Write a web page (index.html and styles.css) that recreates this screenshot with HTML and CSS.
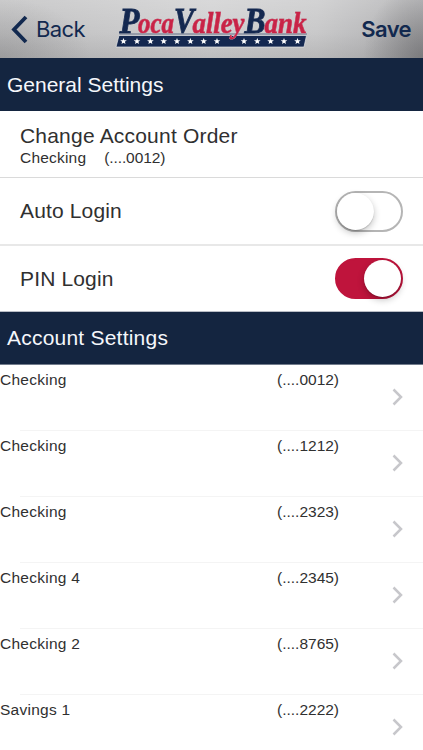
FILE: index.html
```html
<!DOCTYPE html>
<html lang="en">
<head>
<meta charset="utf-8">
<title>Settings</title>
<link rel="stylesheet" href="styles.css">
</head>
<body>
<header class="topbar">
  <a class="back"><svg width="19" height="29" viewBox="0 0 19 29"><path d="M16 2 4 14.5 16 27" fill="none" stroke="#12294f" stroke-width="3.8"/></svg><span>Back</span></a>
  <svg class="logo" width="196" height="58" viewBox="114 0 196 58">
    <defs><path id="star" d="M0-3.4.9-1.1 3.3-1 1.4.5 2 2.8 0 1.5-2 2.8-1.4.5-3.3-1-.9-1.1Z" fill="#fff"/></defs>
    <path d="M119 35.500H306.500L304 47H116Z" fill="#142850" stroke="#e5e6e8" stroke-width=".7"/>
    <path d="M119.500 34H307" stroke="#64708a" stroke-width="1"/>
    <text class="word" y="32.500"><tspan class="cap" x="119.500" textLength="20" lengthAdjust="spacingAndGlyphs">P</tspan><tspan class="low" x="138" textLength="36" lengthAdjust="spacingAndGlyphs">oca</tspan><tspan class="cap" x="174" textLength="20" lengthAdjust="spacingAndGlyphs">V</tspan><tspan class="low" x="192.500" textLength="52" lengthAdjust="spacingAndGlyphs">alley</tspan><tspan class="cap" x="244.500" textLength="21" lengthAdjust="spacingAndGlyphs">B</tspan><tspan class="low" x="264.500" textLength="42" lengthAdjust="spacingAndGlyphs">ank</tspan></text>
    <use href="#star" x="123.500" y="41.300"/><use href="#star" x="137" y="41.300"/><use href="#star" x="150.400" y="41.300"/><use href="#star" x="163.700" y="41.300"/><use href="#star" x="177" y="41.300"/><use href="#star" x="190.400" y="41.300"/><use href="#star" x="203.700" y="41.300"/><use href="#star" x="217" y="41.300"/><use href="#star" x="244" y="41.300"/><use href="#star" x="257.300" y="41.300"/><use href="#star" x="270.600" y="41.300"/><use href="#star" x="284" y="41.300"/><use href="#star" x="297.500" y="41.300"/>
  </svg>
  <a class="save">Save</a>
</header>
<main>
  <h2 class="section general">General Settings</h2>
  <div class="row order"><span class="title">Change Account Order</span><span class="detail"><span>Checking</span><span class="num">(....0012)</span></span></div>
  <div class="row auto"><span>Auto Login</span><span class="switch"><i class="knob"></i></span></div>
  <div class="row last"><span>PIN Login</span><span class="switch on"><i class="knob"></i></span></div>
  <h2 class="section account">Account Settings</h2>
  <div class="list">
    <div class="item"><span class="name">Checking</span><span class="num">(....0012)</span><svg class="chevron" width="11" height="18" viewBox="0 0 11 18"><path d="M1.500 1.500 9 9 1.500 16.500"/></svg></div>
    <div class="item"><span class="name">Checking</span><span class="num">(....1212)</span><svg class="chevron" width="11" height="18" viewBox="0 0 11 18"><path d="M1.500 1.500 9 9 1.500 16.500"/></svg></div>
    <div class="item"><span class="name">Checking</span><span class="num">(....2323)</span><svg class="chevron" width="11" height="18" viewBox="0 0 11 18"><path d="M1.500 1.500 9 9 1.500 16.500"/></svg></div>
    <div class="item"><span class="name">Checking 4</span><span class="num">(....2345)</span><svg class="chevron" width="11" height="18" viewBox="0 0 11 18"><path d="M1.500 1.500 9 9 1.500 16.500"/></svg></div>
    <div class="item"><span class="name">Checking 2</span><span class="num">(....8765)</span><svg class="chevron" width="11" height="18" viewBox="0 0 11 18"><path d="M1.500 1.500 9 9 1.500 16.500"/></svg></div>
    <div class="item"><span class="name">Savings 1</span><span class="num">(....2222)</span><svg class="chevron" width="11" height="18" viewBox="0 0 11 18"><path d="M1.500 1.500 9 9 1.500 16.500"/></svg></div>
  </div>
</main>
</body>
</html>
```
FILE: styles.css
```css
* { box-sizing: border-box; }
body { margin: 0; height: 750px; overflow: hidden; background: #fff; color: #303030; font-family: "Liberation Sans", Arial, sans-serif; }
.topbar {
  display: grid; grid-template-columns: 114px 196px 1fr; height: 58px; color: #12294f;
  background:
    radial-gradient(ellipse 60px 75px at 100% 100%, rgba(85,85,88,.5), transparent),
    radial-gradient(ellipse 90px 60px at 0 100%, rgba(110,110,112,.3), transparent),
    linear-gradient(rgba(255,255,255,.18), rgba(255,255,255,0) 55%, rgba(90,90,92,.16)),
    linear-gradient(90deg, #c0c0c1, #c8c8c9 25%, #d0d0d1 50%, #c9c9ca 75%, #adadaf);
}
.back { display: flex; align-items: center; gap: 7px; padding-left: 10px; font: 22px Inter, sans-serif; letter-spacing: -.6px; }
.logo { display: block; overflow: visible; }
.word { font: italic bold 28px "Liberation Serif", serif; filter: drop-shadow(0 0 .7px #fff) drop-shadow(.5px .5px .5px rgba(70,75,90,.5)); }
.cap { font-size: 35.5px; fill: #142850; stroke: #142850; stroke-width: .9px; }
.low { font-size: 29px; fill: #c82447; stroke: #c82447; stroke-width: .6px; }
.save { align-self: center; justify-self: end; padding-right: 12px; font: 600 22px Inter, sans-serif; letter-spacing: -.6px; }
.section { display: flex; align-items: center; margin: 0; padding-left: 7px; height: 53px; background: #142540; color: #f5f7fb; font-size: 21px; font-weight: 400; }
.section.account { border-bottom: 1px solid #727c8c; letter-spacing: .22px; }
.row { display: flex; align-items: center; justify-content: space-between; padding: 0 20px; border-bottom: 1px solid #dadada; font-size: 21px; letter-spacing: .15px; }
.order { height: 67px; flex-direction: column; align-items: flex-start; justify-content: flex-start; padding-top: 13px; }
.auto { height: 68px; border-bottom: 2px solid #e8e8e8; }
.title { line-height: 24px; letter-spacing: .2px; }
.detail { display: flex; gap: 18px; font-size: 15.5px; line-height: 20px; letter-spacing: .2px; }
.detail .num { letter-spacing: -.1px; }
.last { height: 66px; border-bottom: 1px solid #b9bdc5; }
.switch { display: flex; align-items: center; width: 68px; height: 41px; border: 2px solid #b5b5b5; border-radius: 21px; }
.knob { width: 37px; height: 37px; border-radius: 50%; background: #fff; box-shadow: 0 3px 7px rgba(0,0,0,.24), 0 1px 1px rgba(0,0,0,.16); }
.on { justify-content: flex-end; background: #bf143c; border-color: #bf143c; }
.item { display: grid; grid-template-columns: 277px 115px 1fr; height: 66px; padding-top: 5px; font-size: 15.5px; line-height: 20px; background: linear-gradient(#f4f4f4, #f4f4f4) 20px 100% / 100% 1px no-repeat; }
.name { letter-spacing: .25px; }
.chevron { margin-top: 18px; fill: none; stroke: #c7c7cb; stroke-width: 2.5; }
```
